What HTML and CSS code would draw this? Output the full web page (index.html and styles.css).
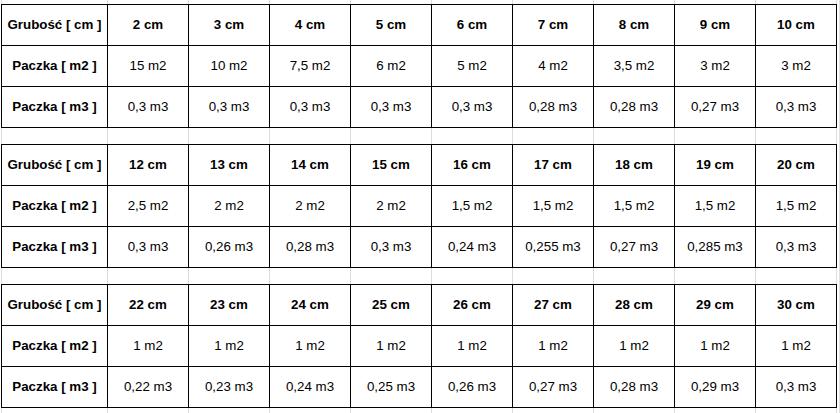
FILE: index.html
```html
<!DOCTYPE html>
<html lang="pl">
<head>
<meta charset="utf-8">
<title>Grubość – paczki</title>
<link rel="stylesheet" href="styles.css">
</head>
<body>
<div class="sheet">
  <div class="grid-strip strip-top">
    <span></span><span></span><span></span><span></span><span></span><span></span><span></span><span></span><span></span><span></span>
  </div>

  <table class="block">
    <tr><th>Grubość [ cm ]</th><th>2 cm</th><th>3 cm</th><th>4 cm</th><th>5 cm</th><th>6 cm</th><th>7 cm</th><th>8 cm</th><th>9 cm</th><th>10 cm</th></tr>
    <tr><th>Paczka [ m2 ]</th><td>15 m2</td><td>10 m2</td><td>7,5 m2</td><td>6 m2</td><td>5 m2</td><td>4 m2</td><td>3,5 m2</td><td>3 m2</td><td>3 m2</td></tr>
    <tr><th>Paczka [ m3 ]</th><td>0,3 m3</td><td>0,3 m3</td><td>0,3 m3</td><td>0,3 m3</td><td>0,3 m3</td><td>0,28 m3</td><td>0,28 m3</td><td>0,27 m3</td><td>0,3 m3</td></tr>
  </table>

  <div class="grid-strip strip-gap">
    <span></span><span></span><span></span><span></span><span></span><span></span><span></span><span></span><span></span><span></span>
  </div>

  <table class="block">
    <tr><th>Grubość [ cm ]</th><th>12 cm</th><th>13 cm</th><th>14 cm</th><th>15 cm</th><th>16 cm</th><th>17 cm</th><th>18 cm</th><th>19 cm</th><th>20 cm</th></tr>
    <tr><th>Paczka [ m2 ]</th><td>2,5 m2</td><td>2 m2</td><td>2 m2</td><td>2 m2</td><td>1,5 m2</td><td>1,5 m2</td><td>1,5 m2</td><td>1,5 m2</td><td>1,5 m2</td></tr>
    <tr><th>Paczka [ m3 ]</th><td>0,3 m3</td><td>0,26 m3</td><td>0,28 m3</td><td>0,3 m3</td><td>0,24 m3</td><td>0,255 m3</td><td>0,27 m3</td><td>0,285 m3</td><td>0,3 m3</td></tr>
  </table>

  <div class="grid-strip strip-gap">
    <span></span><span></span><span></span><span></span><span></span><span></span><span></span><span></span><span></span><span></span>
  </div>

  <table class="block">
    <tr><th>Grubość [ cm ]</th><th>22 cm</th><th>23 cm</th><th>24 cm</th><th>25 cm</th><th>26 cm</th><th>27 cm</th><th>28 cm</th><th>29 cm</th><th>30 cm</th></tr>
    <tr><th>Paczka [ m2 ]</th><td>1 m2</td><td>1 m2</td><td>1 m2</td><td>1 m2</td><td>1 m2</td><td>1 m2</td><td>1 m2</td><td>1 m2</td><td>1 m2</td></tr>
    <tr><th>Paczka [ m3 ]</th><td>0,22 m3</td><td>0,23 m3</td><td>0,24 m3</td><td>0,25 m3</td><td>0,26 m3</td><td>0,27 m3</td><td>0,28 m3</td><td>0,29 m3</td><td>0,3 m3</td></tr>
  </table>

  <div class="grid-strip strip-bottom">
    <span></span><span></span><span></span><span></span><span></span><span></span><span></span><span></span><span></span><span></span>
  </div>
</div>
</body>
</html>
```

FILE: styles.css
```css
html, body {
  margin: 0;
  padding: 0;
  background: #ffffff;
}

body {
  width: 840px;
  height: 413px;
  overflow: hidden;
  font-family: "Liberation Sans", Arial, sans-serif;
  font-size: 13.33px;
  color: #000000;
  background-image: linear-gradient(to right, transparent 839px, #e1e1e1 839px, #e1e1e1 840px);
}

.sheet {
  display: flex;
  flex-direction: column;
  padding-left: 1px;
}

/* spreadsheet gridline strips */
.grid-strip {
  display: flex;
  width: 836px;
  box-sizing: border-box;
  border-left: 1px solid #dcdcdc;
}

.grid-strip span {
  flex: 0 0 81px;
  box-sizing: border-box;
  border-right: 1px solid #dcdcdc;
}

.grid-strip span:first-child {
  flex-basis: 106px;
}

.strip-top { height: 4px; }
.strip-gap { height: 16px; }
.strip-bottom { height: 6px; }

/* data blocks */
.block {
  border-collapse: separate;
  border-spacing: 0;
  table-layout: fixed;
  width: 836px;
  border-left: 1px solid #000;
  border-top: 1px solid #000;
}

.block th,
.block td {
  box-sizing: border-box;
  width: 81px;
  height: 41px;
  padding: 0;
  text-align: center;
  vertical-align: middle;
  border-right: 1px solid #000;
  border-bottom: 1px solid #000;
  white-space: nowrap;
  line-height: 16px;
}

.block th {
  font-weight: bold;
}

.block td {
  font-weight: normal;
}

.block tr > :first-child {
  width: 106px;
}
```
